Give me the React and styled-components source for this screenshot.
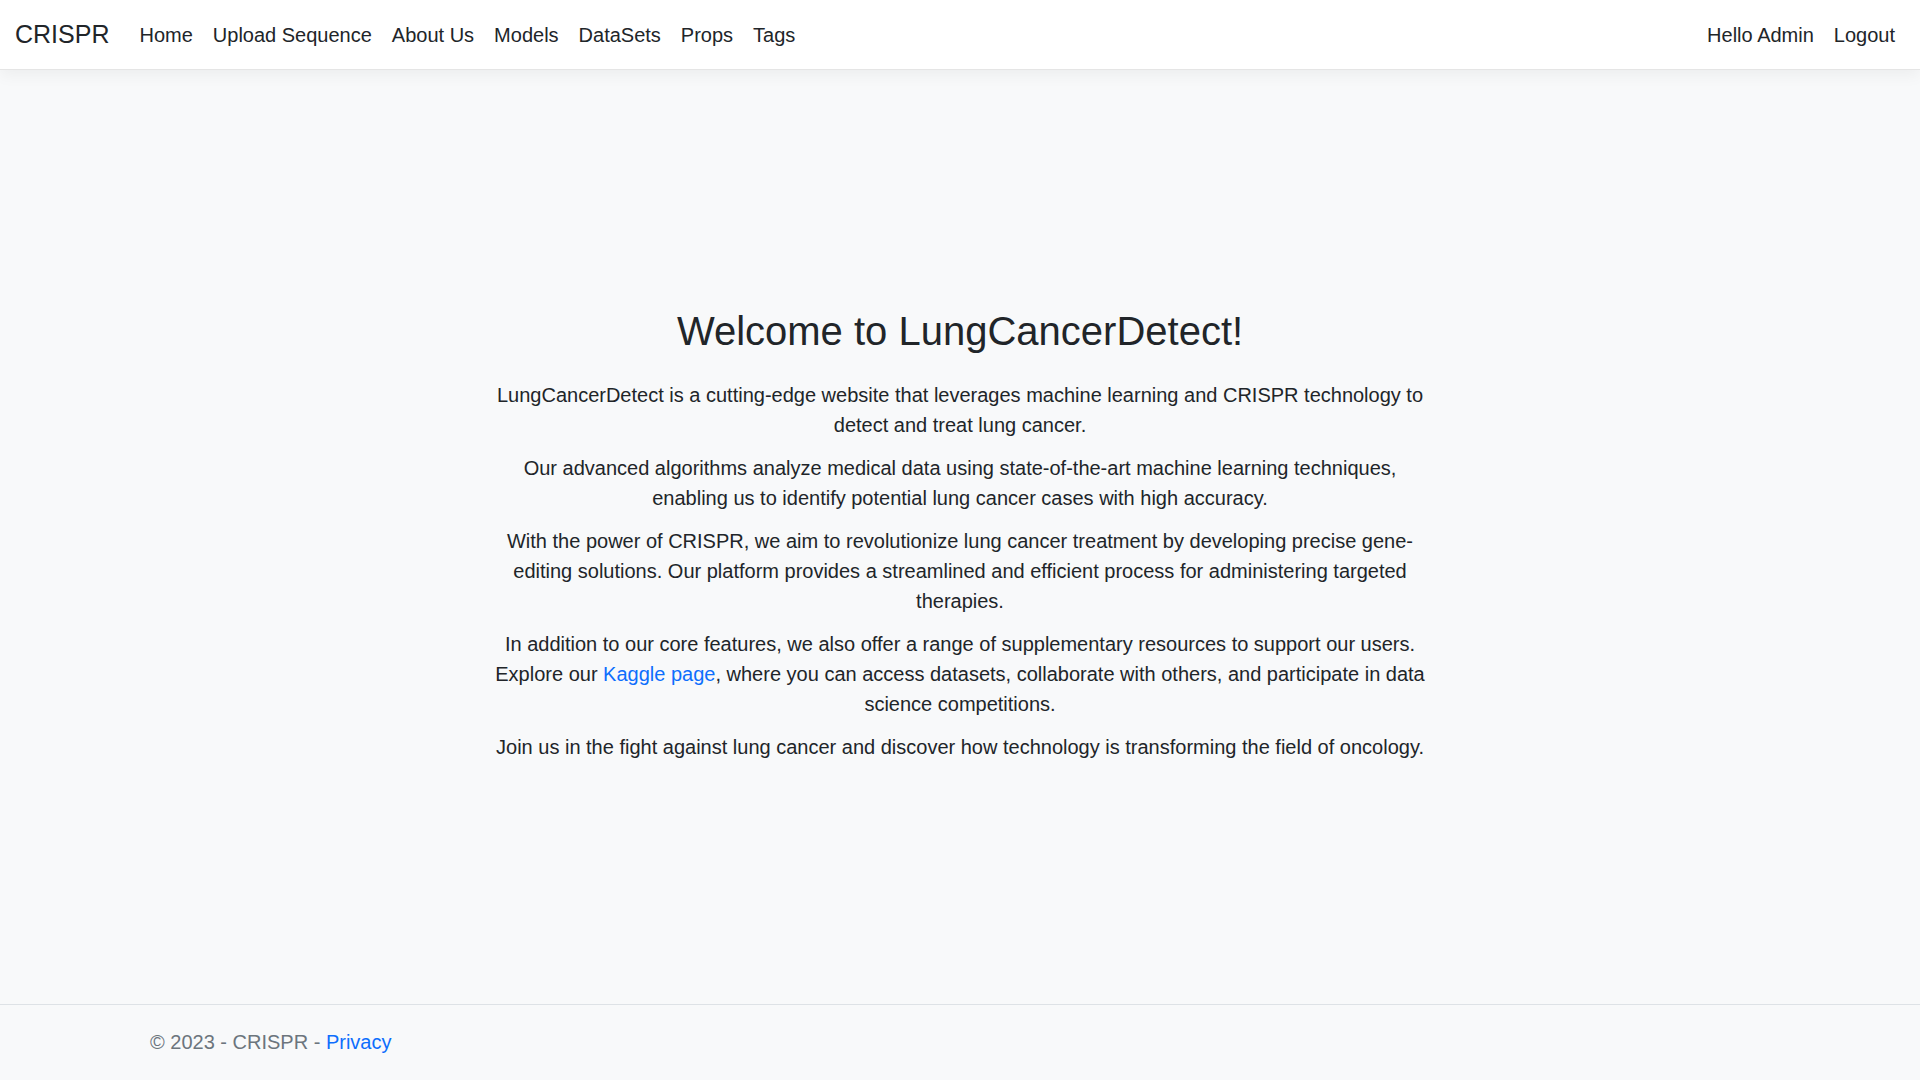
import React from 'react';
import styled, { createGlobalStyle } from 'styled-components';

const GlobalStyle = createGlobalStyle`
  html, body {
    margin: 0;
    padding: 0;
  }
  body {
    font-family: "Liberation Sans", Arial, sans-serif;
    font-size: 20px;
    line-height: 1.5;
    color: #212529;
    background: #f8f9fa;
  }
  * {
    box-sizing: border-box;
  }
`;

const Page = styled.div`
  display: flex;
  flex-direction: column;
  min-height: 100vh;
`;

const Navbar = styled.nav`
  display: flex;
  align-items: center;
  justify-content: space-between;
  height: 70px;
  padding: 0 15px;
  background: #fff;
  border-bottom: 1px solid #e5e5e5;
  box-shadow: 0 5px 15px rgba(0, 0, 0, 0.05);
  position: relative;
  z-index: 1;
`;

const Left = styled.div`
  display: flex;
  align-items: center;
`;

const Brand = styled.a`
  font-size: 25px;
  color: #212529;
  text-decoration: none;
  margin-right: 20px;
  line-height: 1.5;
`;

const NavList = styled.ul`
  display: flex;
  list-style: none;
  margin: 0;
  padding: 0;
`;

const NavLink = styled.a`
  display: block;
  padding: 10px;
  color: #212529;
  text-decoration: none;
  font-size: 20px;
`;

const Main = styled.main`
  flex: 1;
  display: flex;
  align-items: center;
  justify-content: center;
  padding-top: 8px;
`;

const Intro = styled.div`
  max-width: 940px;
  text-align: center;
`;

const Title = styled.h2`
  font-size: 40px;
  font-weight: 500;
  line-height: 1.2;
  margin: 0 0 25px;
`;

const Para = styled.p`
  margin: 0 0 13px;
`;

const Link = styled.a`
  color: #0d6efd;
  text-decoration: none;
`;

const Footer = styled.footer`
  border-top: 1px solid #dee2e6;
  line-height: 75px;
  white-space: nowrap;
  color: #6c757d;
`;

const Container = styled.div`
  width: 1650px;
  margin: 0 auto;
  padding: 0 15px;
`;

const links = ['Home', 'Upload Sequence', 'About Us', 'Models', 'DataSets', 'Props', 'Tags'];

export default function App() {
  return (
    <Page>
      <GlobalStyle />
      <Navbar>
        <Left>
          <Brand href="#">CRISPR</Brand>
          <NavList>
            {links.map((l) => (
              <li key={l}>
                <NavLink href="#">{l}</NavLink>
              </li>
            ))}
          </NavList>
        </Left>
        <NavList>
          <li><NavLink href="#">Hello Admin</NavLink></li>
          <li><NavLink href="#">Logout</NavLink></li>
        </NavList>
      </Navbar>

      <Main>
        <Intro>
          <Title>Welcome to LungCancerDetect!</Title>
          <Para>
            LungCancerDetect is a cutting-edge website that leverages machine learning and CRISPR technology to detect and treat lung cancer.
          </Para>
          <Para>
            Our advanced algorithms analyze medical data using state-of-the-art machine learning techniques, enabling us to identify potential lung cancer cases with high accuracy.
          </Para>
          <Para>
            With the power of CRISPR, we aim to revolutionize lung cancer treatment by developing precise gene-editing solutions. Our platform provides a streamlined and efficient process for administering targeted therapies.
          </Para>
          <Para>
            In addition to our core features, we also offer a range of supplementary resources to support our users. Explore our <Link href="#">Kaggle page</Link>, where you can access datasets, collaborate with others, and participate in data science competitions.
          </Para>
          <Para>
            Join us in the fight against lung cancer and discover how technology is transforming the field of oncology.
          </Para>
        </Intro>
      </Main>

      <Footer>
        <Container>
          &copy; 2023 - CRISPR - <Link href="#">Privacy</Link>
        </Container>
      </Footer>
    </Page>
  );
}
